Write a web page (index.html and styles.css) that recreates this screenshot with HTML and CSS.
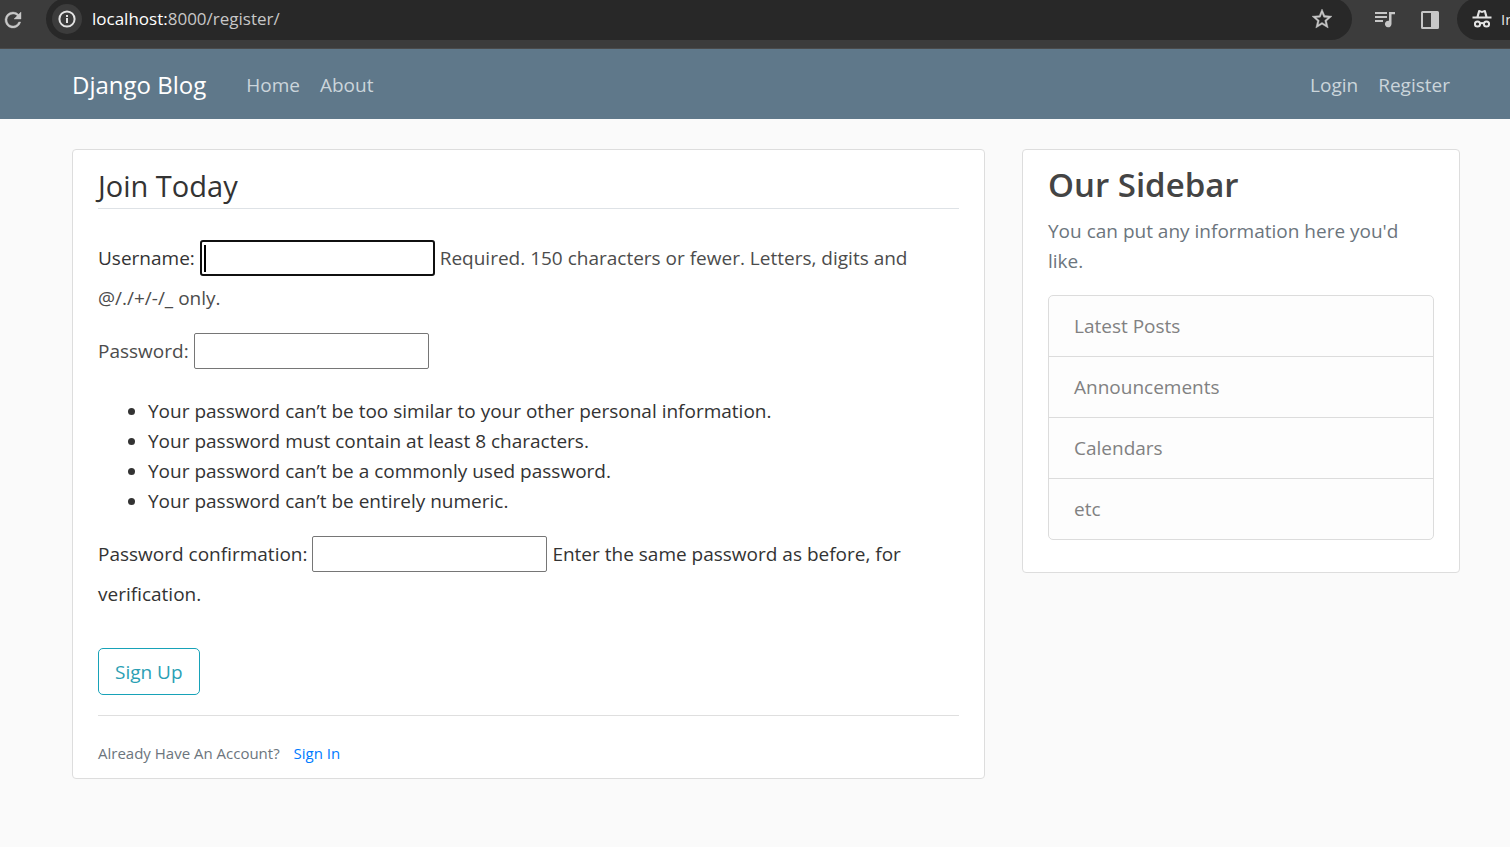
FILE: index.html
```html
<!DOCTYPE html>
<html lang="en">
<head>
<meta charset="utf-8">
<meta name="viewport" content="width=device-width, initial-scale=1">
<title>Register</title>
<link rel="stylesheet" href="styles.css">
</head>
<body>
<div class="browser-bar">
  <button class="icon-button reload" type="button" aria-label="Reload">
    <svg width="24" height="24" viewBox="0 0 24 24"><path fill="#c7c7c7" stroke="#c7c7c7" stroke-width=".4" d="M17.65 6.35A7.96 7.96 0 0 0 12 4a8 8 0 1 0 7.73 10h-2.08A6 6 0 1 1 12 6c1.66 0 3.14.69 4.22 1.78L13 11h7V4z"/></svg>
  </button>
  <div class="address">
    <button class="icon-button site-info" type="button" aria-label="Site information">
      <svg width="20" height="20" viewBox="0 0 20 20"><circle cx="10" cy="10" r="7.6" fill="none" stroke="#e3e3e3" stroke-width="2"/><path fill="#e3e3e3" d="M9 9h2v5H9zM9 6h2v2H9z"/></svg>
    </button>
    <span class="url"><span class="host">localhost:</span>8000/register/</span>
    <button class="icon-button star" type="button" aria-label="Bookmark">
      <svg width="24" height="24" viewBox="0 0 24 24"><path fill="#c7c7c7" stroke="#c7c7c7" stroke-width=".4" d="M22 9.24l-7.19-.62L12 2 9.19 8.63 2 9.24l5.46 4.73L5.82 21 12 17.27 18.18 21l-1.63-7.03zM12 15.4l-3.76 2.27 1-4.28-3.32-2.88 4.38-.38L12 6.100l1.710 4.040 4.380.38-3.320 2.880 1 4.280z"/></svg>
    </button>
  </div>
  <button class="icon-button media" type="button" aria-label="Media controls">
    <svg width="20" height="20" viewBox="0 0 20 20"><path fill="#c7c7c7" d="M0 2h12v2H0zM0 6h12v2H0zM0 10h8v2H0zM14 2h6v2.300h-3.500V14a3.300 3.300 0 1 1-2.500-3.200z"/></svg>
  </button>
  <button class="icon-button panel" type="button" aria-label="Side panel">
    <svg width="20" height="20" viewBox="0 0 20 20"><path fill="#c7c7c7" fill-rule="evenodd" d="M2.500 1h15A1.500 1.500 0 0 1 19 2.500v15a1.500 1.500 0 0 1-1.500 1.500h-15A1.500 1.500 0 0 1 1 17.500v-15A1.500 1.500 0 0 1 2.500 1zM3 3v14h8V3z"/></svg>
  </button>
  <div class="profile">
    <svg class="profile-icon" width="20" height="20" viewBox="0 0 20 20"><path fill="#e3e3e3" d="M4.500 7.500L6.200 1.600Q6.500.7 7.400 1L10 1.900 12.600 1q.9-.3 1.200.6L15.500 7.500H19.500v2H.5v-2z"/><path fill="#282828" d="M6.800 7.500L7.900 3.300 10 4l2.100-.7 1.100 4.200z"/><g fill="none" stroke="#e3e3e3" stroke-width="2"><circle cx="5.500" cy="15" r="2.600"/><circle cx="14.500" cy="15" r="2.600"/><path d="M8 14.800q2-1.400 4 0"/></g></svg>
    <span>Incognito</span>
  </div>
</div>
<header class="site-header">
  <a class="brand" href="#">Django Blog</a>
  <nav class="links">
    <a href="#">Home</a>
    <a href="#">About</a>
  </nav>
  <nav class="links account">
    <a href="#">Login</a>
    <a href="#">Register</a>
  </nav>
</header>
<main class="layout">
  <section class="card content">
    <form>
      <fieldset>
        <legend>Join Today</legend>
        <p class="soft"><label for="username" class="strong">Username:</label>
          <span class="focused"><input id="username" type="text"></span>
          Required. 150 characters or fewer. Letters, digits and @/./+/-/_ only.</p>
        <p class="soft"><label for="password1">Password:</label>
          <input id="password1" type="password"></p>
        <ul>
          <li>Your password can’t be too similar to your other personal information.</li>
          <li>Your password must contain at least 8 characters.</li>
          <li>Your password can’t be a commonly used password.</li>
          <li>Your password can’t be entirely numeric.</li>
        </ul>
        <p><label for="password2">Password confirmation:</label>
          <input id="password2" type="password">
          Enter the same password as before, for verification.</p>
      </fieldset>
      <button class="submit" type="submit">Sign Up</button>
    </form>
    <div class="signin">Already Have An Account? <a href="#">Sign In</a></div>
  </section>
  <aside class="card sidebar">
    <h3>Our Sidebar</h3>
    <p>You can put any information here you'd like.</p>
    <ul>
      <li>Latest Posts</li>
      <li>Announcements</li>
      <li>Calendars</li>
      <li>etc</li>
    </ul>
  </aside>
</main>
</body>
</html>
```

FILE: styles.css
```css
* { box-sizing: border-box; }

body {
  margin: 0;
  background: #fafafa;
  color: #333;
  font: 19px/30px "Open Sans", "Noto Sans", sans-serif;
  overflow-x: hidden;
}

a { text-decoration: none; }
svg { display: block; }

/* Browser toolbar */
.browser-bar {
  display: flex;
  height: 49px;
  padding-bottom: 8px;
  overflow: hidden;
  background: #3c3c3c;
  border-bottom: 1px solid #4a4a4a;
}

.icon-button {
  display: flex;
  flex: none;
  align-items: center;
  justify-content: center;
  padding: 0;
  border: 0;
  background: none;
}

.reload { width: 26px; margin-right: 20px; }
.reload svg { width: 24px; height: 24px; }

.address {
  display: flex;
  flex: 1;
  align-items: center;
  gap: 10px;
  margin-top: -2px;
  padding: 0 18px 0 6px;
  border-radius: 21px;
  background: #282828;
}

.site-info {
  width: 30px;
  height: 30px;
  border-radius: 50%;
  background: #3c3c3c;
}

.url {
  flex: 1;
  color: #c7c7c7;
  font-size: 17px;
}

.host { color: #fff; }

.media { width: 20px; margin-left: 23px; }
.panel { width: 20px; margin: 0 17px 0 25px; }

.profile {
  display: flex;
  flex: none;
  align-items: center;
  gap: 9px;
  width: 53px;
  margin-top: -2px;
  padding-left: 15px;
  overflow: hidden;
  border-radius: 21px 0 0 21px;
  background: #282828;
  color: #e3e3e3;
  font-size: 15px;
}

.profile-icon { flex: none; }

/* Site header */
.site-header {
  display: flex;
  align-items: center;
  min-height: 70px;
  padding: 2px 60px 0 72px;
  background: #5f788a;
}

.brand {
  margin-right: 40px;
  color: #fff;
  font-size: 24px;
}

.links { display: flex; gap: 20px; }
.links a { color: #cbd5db; }
.account { margin-left: auto; }

/* Page */
.layout {
  display: grid;
  grid-template-columns: repeat(12, 1fr);
  column-gap: 37px;
  align-items: start;
  padding: 30px 50px 30px 72px;
}

.card {
  border: 1px solid #ddd;
  border-radius: 4px;
  background: #fff;
}

.content { grid-column: span 8; padding: 12px 25px 10px; }

fieldset {
  min-width: 0;
  margin: 0 0 34px;
  padding: 0;
  border: 0;
}

legend {
  width: 100%;
  margin-bottom: 29px;
  padding: 4px 0 2px;
  border-bottom: 1px solid #dee2e6;
  font-size: 29px;
  line-height: 40px;
}

fieldset p { margin: 0 0 13px; line-height: 40px; }
.soft { color: #4c4c4c; }
.strong { color: #333; }

input {
  width: 235px;
  height: 36px;
  padding: 1px 2px;
  border: 1px solid #767676;
  border-radius: 2px;
  background: #fff;
  font: inherit;
  line-height: 30px;
}

.focused { position: relative; }

.focused input {
  border: 2px solid #101010;
  border-radius: 3px;
}

/* Text caret */
.focused::before {
  content: "";
  position: absolute;
  left: 4px;
  top: 0;
  width: 2px;
  height: 27px;
  background: #000;
}

fieldset ul { margin: 25px 0 18px; padding-left: 50px; }
fieldset p:last-child { margin: 0; }

.submit {
  display: block;
  padding: 8px 16px 7px;
  border: 1px solid #17a2b8;
  border-radius: 5px;
  background: #fff;
  color: #2b9fb4;
  font: inherit;
}

.signin {
  margin-top: 20px;
  padding-top: 22px;
  border-top: 1px solid #dfdfdf;
  color: #6c757d;
  font-size: 15px;
}

.signin a { margin-left: 10px; color: #007bff; }

.sidebar { grid-column: span 4; padding: 12px 25px 32px; color: #7b8187; }

.sidebar h3 {
  margin: 0 0 9px;
  color: #444;
  font-size: 33px;
  font-weight: 600;
  line-height: 45px;
}

.sidebar p { margin: 0 0 19px; color: #6c757d; }

.sidebar ul {
  margin: 0;
  padding: 0;
  overflow: hidden;
  border: 1px solid #dcdcdc;
  border-radius: 5px;
  background: #fdfdfd;
  color: #818182;
  list-style: none;
}

.sidebar li { padding: 15px 25px; }
.sidebar li + li { border-top: 1px solid #dcdcdc; }
```
